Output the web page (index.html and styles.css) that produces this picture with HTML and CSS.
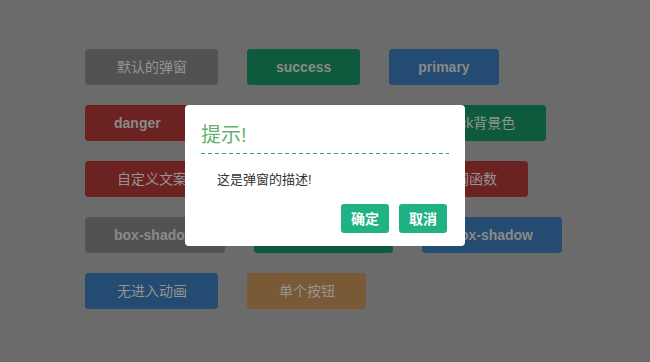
FILE: index.html
```html
<!DOCTYPE html>
<html lang="zh-CN">
<head>
<meta charset="utf-8">
<title>弹窗示例</title>
<link rel="stylesheet" href="styles.css">
</head>
<body>
<div class="page">
  <div class="row">
    <button class="btn btn-default cjk">默认的弹窗</button>
    <button class="btn btn-success">success</button>
    <button class="btn btn-primary">primary</button>
  </div>
  <div class="row">
    <button class="btn btn-danger">danger</button>
    <button class="btn btn-warning cjk">自定义遮罩背景</button>
    <button class="btn btn-success cjk">black背景色</button>
  </div>
  <div class="row">
    <button class="btn btn-danger cjk">自定义文案</button>
    <button class="btn btn-primary cjk">关闭时回调</button>
    <button class="btn btn-danger cjk">回调函数</button>
  </div>
  <div class="row">
    <button class="btn btn-default">box-shadow</button>
    <button class="btn btn-success">box-shadow</button>
    <button class="btn btn-primary">box-shadow</button>
  </div>
  <div class="row">
    <button class="btn btn-primary cjk">无进入动画</button>
    <button class="btn btn-warning cjk">单个按钮</button>
  </div>
</div>

<div class="dialog">
  <div class="dialog-title">提示!</div>
  <div class="dialog-body">这是弹窗的描述!</div>
  <div class="dialog-footer">
    <button class="dialog-btn">确定</button>
    <button class="dialog-btn">取消</button>
  </div>
</div>
</body>
</html>
```
FILE: styles.css
```css
html, body {
  margin: 0;
  padding: 0;
}
body {
  background: #6b6b6b;
  width: 650px;
  height: 362px;
  overflow: hidden;
  position: relative;
  font-family: "Liberation Sans", "Noto Sans CJK SC", sans-serif;
}
.page {
  padding: 49px 0 0 85px;
  display: flex;
  flex-direction: column;
  gap: 20px;
}
.row {
  display: flex;
  gap: 29px;
}
.btn {
  height: 36px;
  padding: 0 28px;
  border: 1px solid transparent;
  border-radius: 3px;
  font-family: "Liberation Sans", "Noto Sans CJK SC", sans-serif;
  font-size: 14px;
  font-weight: bold;
  line-height: 34px;
  color: #8a8a8a;
  white-space: nowrap;
}
.btn.cjk {
  padding: 0 30px 0 31px;
  font-weight: normal;
  color: #949494;
}
.btn-default { background: #525252; border-color: #555; }
.btn-success { background: #0e5a3c; border-color: #0e5a3c; }
.btn-primary { background: #244b71; border-color: #244b71; }
.btn-danger { background: #6d2222; border-color: #6d2222; }
.btn-warning { background: #7a5937; border-color: #7a5937; }

.dialog {
  position: absolute;
  left: 185px;
  top: 105px;
  width: 280px;
  background: #fff;
  border-radius: 4px;
  padding: 0 16px 13px;
  box-sizing: border-box;
  font-family: "Liberation Sans", "Noto Sans CJK SC", sans-serif;
}
.dialog-title {
  position: relative;
  padding-top: 17px;
  height: 32px;
  line-height: 26px;
  font-size: 20px;
  color: #5fb36e;
}
.dialog-title::after {
  content: "";
  position: absolute;
  left: 0;
  right: 0;
  bottom: 0;
  height: 1px;
  background: repeating-linear-gradient(90deg, #0fb287 0 4px, transparent 4px 7px);
}
.dialog-body {
  padding: 0 16px;
  margin-top: 17px;
  font-size: 13px;
  line-height: 18px;
  color: #333;
}
.dialog-footer {
  display: flex;
  justify-content: flex-end;
  gap: 10px;
  margin-top: 15px;
  padding-right: 2px;
}
.dialog-btn {
  width: 48px;
  height: 29px;
  padding: 0;
  border: none;
  border-radius: 3px;
  background: #21b283;
  color: #fff;
  font-family: "Noto Sans CJK SC", sans-serif;
  font-size: 14px;
  font-weight: bold;
  line-height: 29px;
}
```
